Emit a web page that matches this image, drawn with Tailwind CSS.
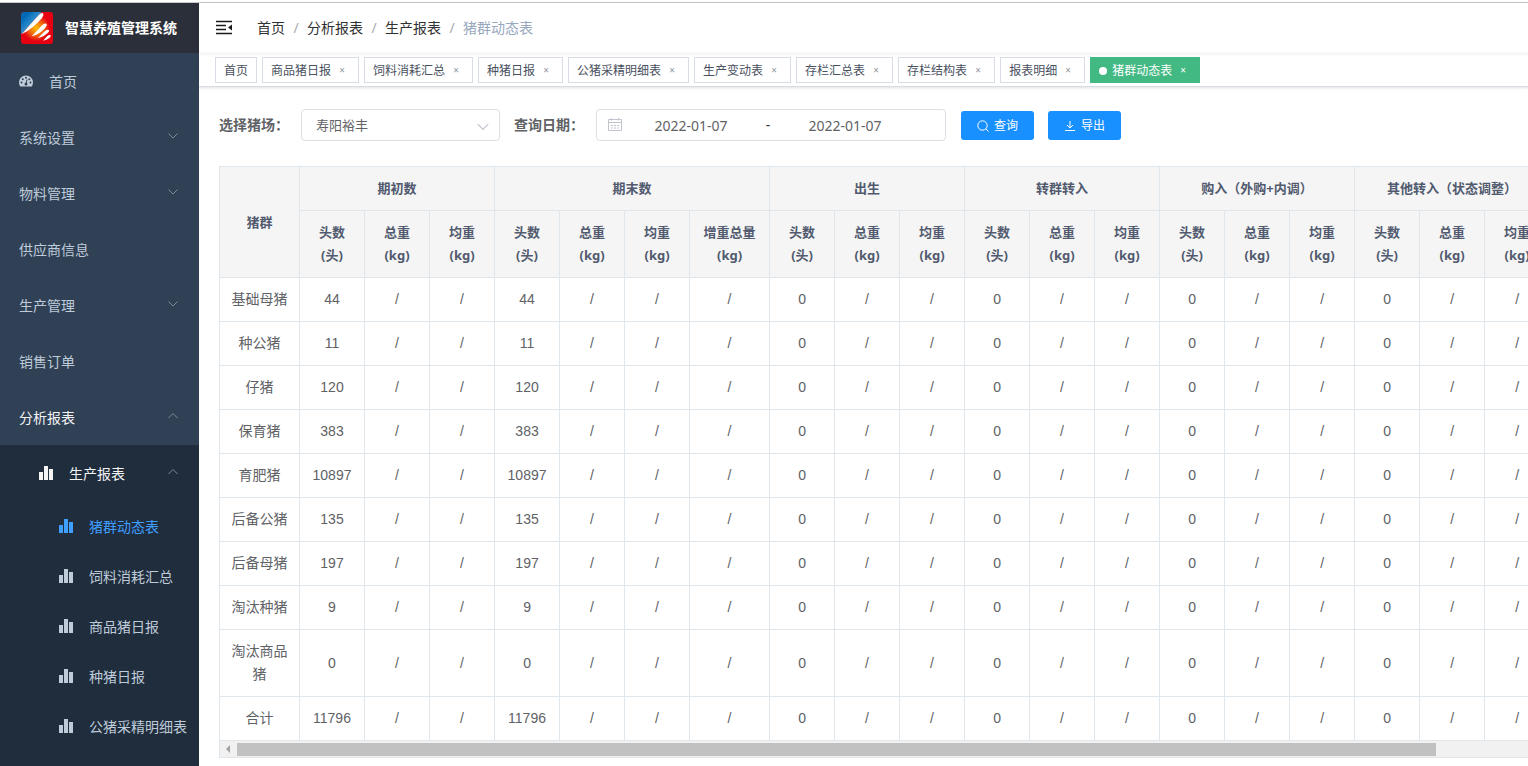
<!DOCTYPE html>
<html lang="zh-CN">

<head>
    <title>智慧养殖管理系统</title>
    <meta charset="utf-8">
    <meta name="viewport" content="width=device-width, initial-scale=1.0">
    <script src="https://cdn.jsdelivr.net/npm/@tailwindcss/browser@4"></script>
</head>

<body class="h-screen flex flex-col overflow-hidden bg-white font-['Noto_Sans','Noto_Sans_CJK_SC',sans-serif] text-sm text-[#606266]">
    <svg class="hidden">
        <symbol id="bars" viewBox="0 0 14 14"><path fill="currentColor" d="M0 6h4v8H0zM5 0h4v14H5zM10 3h4v11h-4z"/></symbol>
        <symbol id="down" viewBox="0 0 12 12"><path fill="none" stroke="currentColor" d="M1.500 3.500 6 8l4.500-4.500"/></symbol>
        <symbol id="up" viewBox="0 0 12 12"><path fill="none" stroke="currentColor" d="M1.500 8 6 3.500 10.500 8"/></symbol>
    </svg>

    <div class="h-[3px] shrink-0 border-b border-[#c8c8c8]"></div>

    <div class="flex flex-1 min-h-0">
        <aside class="w-[199px] shrink-0 overflow-hidden bg-[#304156] text-[#bfcbd9]">
            <a href="#" class="flex items-center h-[50px] pl-[21px] gap-3 bg-[#2b2f3a] text-white font-bold whitespace-nowrap">
                <svg class="size-8 shrink-0" viewBox="0 0 96 96">
                    <defs>
                        <linearGradient id="logo-blue" x1="0" y1="0" x2=".6" y2=".6">
                            <stop offset=".3" stop-color="#0068b7"/>
                            <stop offset="1" stop-color="#3f98d4"/>
                        </linearGradient>
                        <radialGradient id="logo-red" cx=".48" cy=".5" r=".42">
                            <stop offset="0" stop-color="#fdc000"/>
                            <stop offset=".5" stop-color="#f07010"/>
                            <stop offset="1" stop-color="#e60012"/>
                        </radialGradient>
                    </defs>
                    <rect width="96" height="96" rx="10" fill="url(#logo-red)"/>
                    <path fill="url(#logo-blue)" d="M10 0h52L2 66 0 60V10Q0 0 10 0z"/>
                    <g fill="#fff">
                        <path d="M2 67 54 8q9-8 13-3 2 4-4 13Q36 50 2 67z"/>
                        <path d="M32 73 64 39q9-7 13-3 2 4-4 11-15 18-41 26z"/>
                        <path d="M50 79 72 57q8-6 12-3 2 4-4 9-12 12-30 16z"/>
                        <path d="M66 86 78 73q8-6 11-3 2 4-4 8-8 7-19 8z"/>
                    </g>
                </svg>
                智慧养殖管理系统
            </a>
            <nav>
                <a href="#" class="flex items-center h-14 pt-0.5 pl-[19px] gap-4">
                    <svg class="w-[14px] h-[14px]" viewBox="0 0 14 14">
                        <path fill="currentColor" d="M7 .5a7 7 0 0 0-7 7c0 1.500.4 2.800 1.200 4h11.600c.8-1.200 1.200-2.500 1.200-4a7 7 0 0 0-7-7z"/>
                        <g fill="#304156"><circle cx="2.500" cy="7.500" r="1"/><circle cx="3.800" cy="4.200" r="1"/><circle cx="7" cy="2.800" r="1"/><circle cx="10.300" cy="4.200" r="1"/><circle cx="11.500" cy="7.500" r="1"/><circle cx="7" cy="9" r="1.500"/></g>
                        <path stroke="#304156" d="M7 9l1-4.500"/>
                    </svg>
                    首页
                </a>
                <a href="#" class="flex items-center justify-between h-14 pt-0.5 pl-[19px] pr-5">系统设置<svg class="size-3 mb-1 text-[#7d8896]"><use href="#down"/></svg></a>
                <a href="#" class="flex items-center justify-between h-14 pt-0.5 pl-[19px] pr-5">物料管理<svg class="size-3 mb-1 text-[#7d8896]"><use href="#down"/></svg></a>
                <a href="#" class="flex items-center h-14 pt-0.5 pl-[19px]">供应商信息</a>
                <a href="#" class="flex items-center justify-between h-14 pt-0.5 pl-[19px] pr-5">生产管理<svg class="size-3 mb-1 text-[#7d8896]"><use href="#down"/></svg></a>
                <a href="#" class="flex items-center h-14 pt-0.5 pl-[19px]">销售订单</a>
                <a href="#" class="flex items-center justify-between h-14 pt-0.5 pl-[19px] pr-5 text-[#f4f4f5]">分析报表<svg class="size-3 mb-1 text-[#7d8896]"><use href="#up"/></svg></a>

                <div class="bg-[#1f2d3d] pb-14 whitespace-nowrap">
                    <a href="#" class="flex items-center h-14 pt-0.5 pl-[39px] pr-5 gap-4 text-[#f4f4f5]">
                        <svg class="size-[14px] mb-0.5"><use href="#bars"/></svg>生产报表
                        <svg class="size-3 mb-1 ml-auto text-[#7d8896]"><use href="#up"/></svg>
                    </a>
                    <a href="#" class="flex items-center h-[50px] pt-0.5 pl-[59px] gap-4 text-[#409eff]"><svg class="size-[14px] mb-0.5 shrink-0"><use href="#bars"/></svg>猪群动态表</a>
                    <a href="#" class="flex items-center h-[50px] pt-0.5 pl-[59px] gap-4"><svg class="size-[14px] mb-0.5 shrink-0"><use href="#bars"/></svg>饲料消耗汇总</a>
                    <a href="#" class="flex items-center h-[50px] pt-0.5 pl-[59px] gap-4"><svg class="size-[14px] mb-0.5 shrink-0"><use href="#bars"/></svg>商品猪日报</a>
                    <a href="#" class="flex items-center h-[50px] pt-0.5 pl-[59px] gap-4"><svg class="size-[14px] mb-0.5 shrink-0"><use href="#bars"/></svg>种猪日报</a>
                    <a href="#" class="flex items-center h-[50px] pt-0.5 pl-[59px] gap-4"><svg class="size-[14px] mb-0.5 shrink-0"><use href="#bars"/></svg>公猪采精明细表</a>
                </div>
            </nav>
        </aside>

        <main class="flex-1 min-w-0">
            <header class="flex items-center h-[50px] pl-[17px] shadow-[0_1px_4px_rgba(0,21,41,0.08)]">
                <button type="button" aria-label="收起菜单" class="mr-[25px]">
                    <svg class="w-4 h-4" viewBox="0 0 16 16">
                        <path stroke="#1a1a1a" stroke-width="1.500" d="M0 1.500h16M0 5.500h10M0 9.500h10M0 13.500h16"/>
                        <path fill="#1a1a1a" d="M16 4.500v6l-4-3z"/>
                    </svg>
                </button>
                <div class="flex text-[#303133]">
                    <a href="#">首页</a><span class="w-[22px] text-center text-[#a8abb2]">/</span>
                    <a href="#">分析报表</a><span class="w-[22px] text-center text-[#a8abb2]">/</span>
                    <a href="#">生产报表</a><span class="w-[22px] text-center text-[#a8abb2]">/</span>
                    <span class="text-[#97a8be]">猪群动态表</span>
                </div>
            </header>

            <div id="tags" class="flex items-center gap-[5px] h-[34px] pl-4 border-b border-[#d8dce5] text-xs text-[#495060] shadow-[0_1px_3px_rgba(0,0,0,0.12)]"></div>

            <div class="pl-5 pt-[22px]">
                <form class="flex items-center h-8">
                    <label for="farm" class="font-bold w-[82px]">选择猪场：</label>
                    <div class="relative w-[199px] mr-[14px]">
                        <select id="farm" class="appearance-none w-full h-8 pl-[14px] border border-[#dcdfe6] rounded text-[13px] bg-white">
                            <option>寿阳裕丰</option>
                        </select>
                        <svg class="absolute right-[10px] top-[11px] size-[14px] text-[#c0c4cc]" viewBox="0 0 12 12"><use href="#down"/></svg>
                    </div>
                    <label for="start" class="font-bold w-[82px]">查询日期：</label>
                    <div class="flex items-center w-[350px] h-8 mr-[15px] px-[11px] border border-[#dcdfe6] rounded">
                        <svg class="w-[14px] h-[14px]" viewBox="0 0 14 14" fill="none" stroke="#c0c4cc">
                            <path d="M.5 1.500h13v11H.5zM.5 4.500h13M3.500 0v2.500M10.500 0v2.500M3 7.500h2M6 7.500h2M9 7.500h2M3 10h2M6 10h2M9 10h2"/>
                        </svg>
                        <input id="start" type="text" value="2022-01-07" class="w-[138px] pt-0.5 text-center">
                        <span class="w-4 text-center text-[#303133]">-</span>
                        <input id="end" type="text" aria-label="结束日期" value="2022-01-07" class="w-[138px] pt-0.5 text-center">
                    </div>
                    <button type="button" class="flex items-center justify-center gap-[5px] w-[73px] h-[29px] pt-0.5 mr-[14px] rounded-[3px] bg-[#1890ff] text-white text-xs">
                        <svg class="size-3 mb-px" viewBox="0 0 12 12" fill="none" stroke="currentColor"><circle cx="5.500" cy="5.500" r="4.700"/><path d="M9 9l2.500 2.500"/></svg>查询
                    </button>
                    <button type="button" class="flex items-center justify-center gap-[5px] w-[73px] h-[29px] pt-0.5 rounded-[3px] bg-[#1890ff] text-white text-xs">
                        <svg class="size-3 mb-px" viewBox="0 0 12 12" fill="none" stroke="currentColor"><path d="M6 1v7M3 5l3 3 3-3M1 10.500h10"/></svg>导出
                    </button>
                </form>

                <div class="mt-[25px] overflow-hidden border-l border-t border-b border-[#dfe6ec]">
                    <table class="table-fixed border-separate border-spacing-0 w-[1330px] text-center leading-[23px] [&_th]:border-r [&_th]:border-b [&_th]:border-[#dfe6ec] [&_th]:bg-[#f5f5f5] [&_th]:text-[#515a6e] [&_th]:text-[13px] [&_td]:border-r [&_td]:border-b [&_td]:border-[#dfe6ec] [&_td]:px-[10px] [&_td]:py-[10px] [&_td]:font-['Liberation_Sans','Noto_Sans_CJK_SC',sans-serif]">
                        <colgroup>
                            <col class="w-20">
                            <col class="w-[65px]" span="6">
                            <col class="w-20">
                            <col class="w-[65px]" span="12">
                        </colgroup>
                        <thead>
                            <tr class="h-11">
                                <th rowspan="2">猪群</th>
                                <th colspan="3">期初数</th>
                                <th colspan="4">期末数</th>
                                <th colspan="3">出生</th>
                                <th colspan="3">转群转入</th>
                                <th colspan="3">购入（外购+内调）</th>
                                <th colspan="3">其他转入（状态调整）</th>
                            </tr>
                            <tr id="sub-head" class="h-[67px]"></tr>
                        </thead>
                        <tbody id="rows"></tbody>
                    </table>
                    <!-- horizontal scroll bar -->
                    <div class="flex items-center h-4 bg-[#f1f1f1]">
                        <svg class="w-[17px] h-4" viewBox="0 0 17 16"><path fill="#a3a3a3" d="M10 4v8L6 8z"/></svg>
                        <div class="w-11/12 h-[13px] bg-[#c1c1c1]"></div>
                    </div>
                </div>
            </div>
        </main>
    </div>

    <script>
        const tags = ["首页", "商品猪日报", "饲料消耗汇总", "种猪日报", "公猪采精明细表", "生产变动表", "存栏汇总表", "存栏结构表", "报表明细", "猪群动态表"];

        document.getElementById("tags").innerHTML = tags.map((name, i) => {
            if (i === tags.length - 1) {
                return `<div class="flex items-center h-[26px] pt-0.5 px-2 border border-[#42b983] bg-[#42b983] text-white"><span class="size-2 mr-[5px] rounded-full bg-white"></span><a href="#">${name}</a><button type="button" aria-label="关闭" class="w-4 ml-[3px] text-center text-[10px]">×</button></div>`;
            }
            // the home tag can't be closed
            const close = i ? '<button type="button" aria-label="关闭" class="w-4 ml-[3px] text-center text-[10px] opacity-60">×</button>' : "";
            return `<div class="flex items-center h-[26px] pt-0.5 px-2 border border-[#d8dce5]"><a href="#">${name}</a>${close}</div>`;
        }).join("");

        const heads = ["头数<br>(头)", "总重<br>(kg)", "均重<br>(kg)"];
        const cols = [...heads, ...heads, "增重总量<br>(kg)", ...heads, ...heads, ...heads, ...heads];
        document.getElementById("sub-head").innerHTML = cols.map(c => `<th>${c}</th>`).join("");

        const herds = [
            ["基础母猪", 44],
            ["种公猪", 11],
            ["仔猪", 120],
            ["保育猪", 383],
            ["育肥猪", 10897],
            ["后备公猪", 135],
            ["后备母猪", 197],
            ["淘汰种猪", 9],
            ["淘汰商品猪", 0],
            ["合计", 11796],
        ];
        document.getElementById("rows").innerHTML = herds.map(([name, n]) => {
            const cells = [n, "/", "/", n, "/", "/", "/"];
            for (let i = 0; i < 4; i++) cells.push(0, "/", "/");
            return `<tr><td>${name}</td>${cells.map(c => `<td>${c}</td>`).join("")}</tr>`;
        }).join("");
    </script>
</body>

</html>
